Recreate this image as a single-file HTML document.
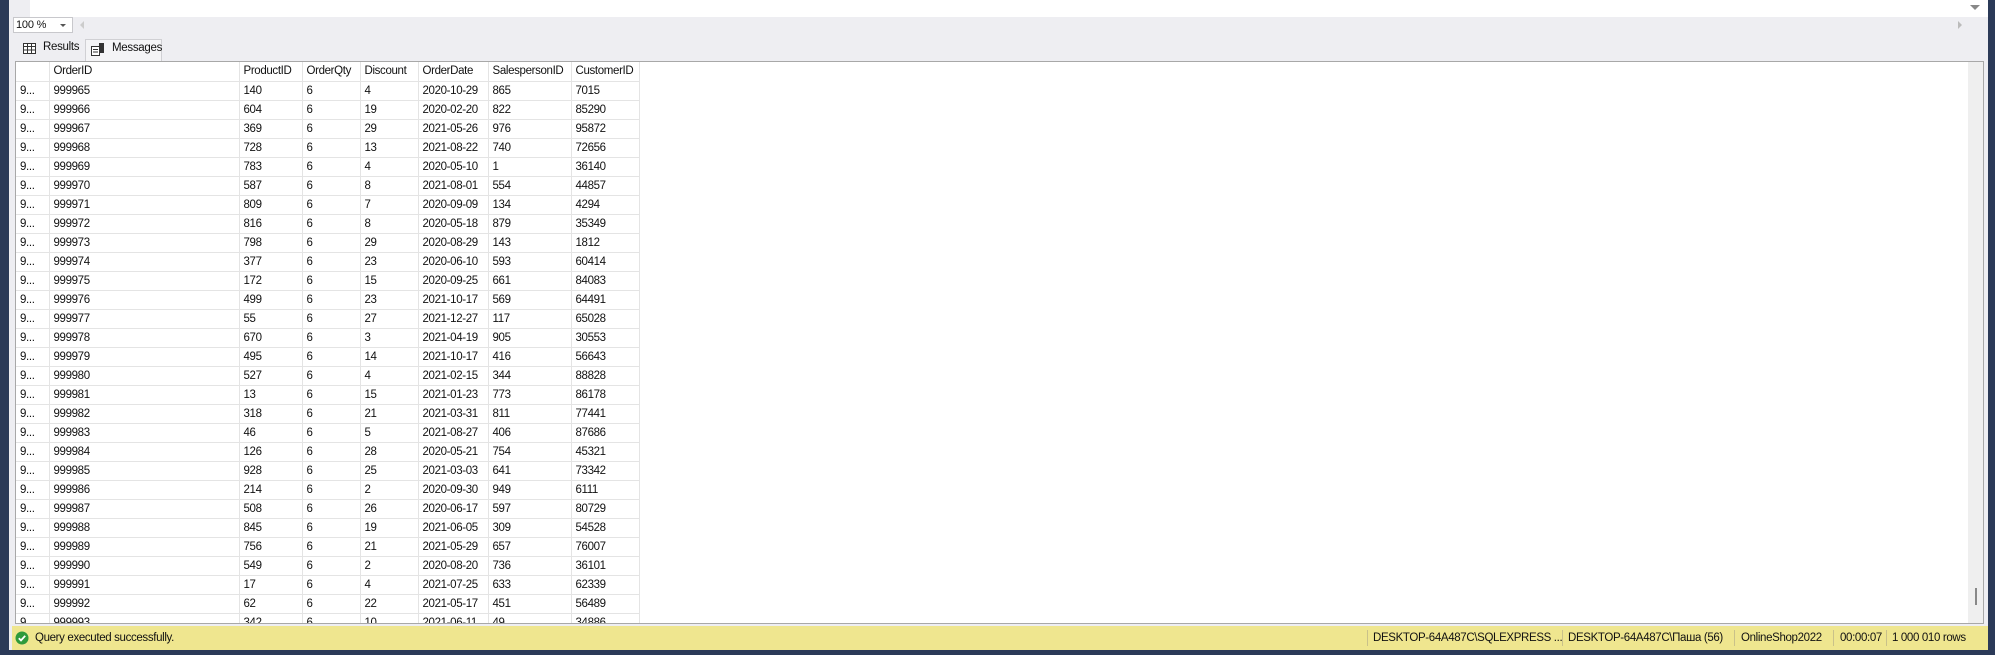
<!DOCTYPE html>
<html><head><meta charset="utf-8"><style>
*{margin:0;padding:0;box-sizing:border-box}
body{width:1995px;height:655px;background:#2b3a58;position:relative;overflow:hidden;font-family:"Liberation Sans","DejaVu Sans",sans-serif;font-size:12px;color:#111}
.abs{position:absolute}
#main{left:9px;top:0;width:1979px;height:650px;background:#eeeef2}
#topw{left:30px;top:0;width:1958px;height:17px;background:#fff}
#zoom{left:13px;top:17px;width:60px;height:16px;background:#fff;border:1px solid #c8c8cc;font-size:11px;line-height:14px;padding-left:2px;letter-spacing:-0.2px}
#grid{left:15px;top:61px;width:1969px;height:563px;background:#fff;border:1px solid #a8a8a8;overflow:hidden}
table{border-collapse:collapse;table-layout:fixed;position:absolute;left:0;top:0}
td{height:19px;border-right:1px solid #e4e4e4;border-bottom:1px solid #e4e4e4;padding-left:4px;white-space:nowrap;overflow:hidden;line-height:18px;font-size:11.5px;letter-spacing:-0.35px}
#vs{right:0;top:0;width:15px;height:563px;background:#efefef}
#status{left:12px;top:626px;width:1976px;height:24px;background:#efe68f;font-size:11.5px;line-height:24px;letter-spacing:-0.35px}
.sep{position:absolute;top:4px;width:1px;height:16px;background:#c9c18a}
</style></head><body>
<div class="abs" id="main"></div>
<div class="abs" id="topw"></div>
<div class="abs" style="left:1970px;top:5px;width:0;height:0;border-left:5px solid transparent;border-right:5px solid transparent;border-top:5px solid #888"></div>
<div class="abs" id="zoom">100 %<span style="position:absolute;left:46px;top:6px;border-left:3px solid transparent;border-right:3px solid transparent;border-top:3px solid #555"></span></div>
<div class="abs" style="left:80px;top:21px;border-top:4px solid transparent;border-bottom:4px solid transparent;border-right:4px solid #ccc"></div>
<div class="abs" style="left:1958px;top:21px;border-top:4px solid transparent;border-bottom:4px solid transparent;border-left:4px solid #bbb"></div>
<div class="abs" style="left:10px;top:38px;width:75px;height:23px;background:#eeeef2"></div>
<svg class="abs" style="left:23px;top:43px" width="13" height="11"><rect x="0.5" y="0.5" width="12" height="10" fill="#fff" stroke="#333"/><path d="M0 3.5H13M0 7H13M4.5 0V11M8.5 0V11" stroke="#333"/></svg>
<div class="abs" style="left:43px;top:41px;font-size:11.5px;letter-spacing:-0.3px">Results</div>
<div class="abs" style="left:85px;top:39px;width:77px;height:22px;border:1px solid #d0d0d4;border-bottom:none;background:#f4f4f6"></div>
<svg class="abs" style="left:91px;top:43px" width="14" height="13"><rect x="0.5" y="3.5" width="8" height="9" fill="#fff" stroke="#333"/><path d="M2 6.5H7M2 9H7" stroke="#333"/><rect x="8" y="0" width="5" height="10" fill="#333"/></svg>
<div class="abs" style="left:112px;top:42px;font-size:11.5px;letter-spacing:-0.3px">Messages</div>
<div class="abs" id="grid">
<table>
<colgroup><col style="width:33px"><col style="width:190px"><col style="width:63px"><col style="width:58px"><col style="width:58px"><col style="width:70px"><col style="width:83px"><col style="width:68px"></colgroup>
<tr><td></td><td>OrderID</td><td>ProductID</td><td>OrderQty</td><td>Discount</td><td>OrderDate</td><td>SalespersonID</td><td>CustomerID</td></tr>
<tr><td>9...</td><td>999965</td><td>140</td><td>6</td><td>4</td><td>2020-10-29</td><td>865</td><td>7015</td></tr>
<tr><td>9...</td><td>999966</td><td>604</td><td>6</td><td>19</td><td>2020-02-20</td><td>822</td><td>85290</td></tr>
<tr><td>9...</td><td>999967</td><td>369</td><td>6</td><td>29</td><td>2021-05-26</td><td>976</td><td>95872</td></tr>
<tr><td>9...</td><td>999968</td><td>728</td><td>6</td><td>13</td><td>2021-08-22</td><td>740</td><td>72656</td></tr>
<tr><td>9...</td><td>999969</td><td>783</td><td>6</td><td>4</td><td>2020-05-10</td><td>1</td><td>36140</td></tr>
<tr><td>9...</td><td>999970</td><td>587</td><td>6</td><td>8</td><td>2021-08-01</td><td>554</td><td>44857</td></tr>
<tr><td>9...</td><td>999971</td><td>809</td><td>6</td><td>7</td><td>2020-09-09</td><td>134</td><td>4294</td></tr>
<tr><td>9...</td><td>999972</td><td>816</td><td>6</td><td>8</td><td>2020-05-18</td><td>879</td><td>35349</td></tr>
<tr><td>9...</td><td>999973</td><td>798</td><td>6</td><td>29</td><td>2020-08-29</td><td>143</td><td>1812</td></tr>
<tr><td>9...</td><td>999974</td><td>377</td><td>6</td><td>23</td><td>2020-06-10</td><td>593</td><td>60414</td></tr>
<tr><td>9...</td><td>999975</td><td>172</td><td>6</td><td>15</td><td>2020-09-25</td><td>661</td><td>84083</td></tr>
<tr><td>9...</td><td>999976</td><td>499</td><td>6</td><td>23</td><td>2021-10-17</td><td>569</td><td>64491</td></tr>
<tr><td>9...</td><td>999977</td><td>55</td><td>6</td><td>27</td><td>2021-12-27</td><td>117</td><td>65028</td></tr>
<tr><td>9...</td><td>999978</td><td>670</td><td>6</td><td>3</td><td>2021-04-19</td><td>905</td><td>30553</td></tr>
<tr><td>9...</td><td>999979</td><td>495</td><td>6</td><td>14</td><td>2021-10-17</td><td>416</td><td>56643</td></tr>
<tr><td>9...</td><td>999980</td><td>527</td><td>6</td><td>4</td><td>2021-02-15</td><td>344</td><td>88828</td></tr>
<tr><td>9...</td><td>999981</td><td>13</td><td>6</td><td>15</td><td>2021-01-23</td><td>773</td><td>86178</td></tr>
<tr><td>9...</td><td>999982</td><td>318</td><td>6</td><td>21</td><td>2021-03-31</td><td>811</td><td>77441</td></tr>
<tr><td>9...</td><td>999983</td><td>46</td><td>6</td><td>5</td><td>2021-08-27</td><td>406</td><td>87686</td></tr>
<tr><td>9...</td><td>999984</td><td>126</td><td>6</td><td>28</td><td>2020-05-21</td><td>754</td><td>45321</td></tr>
<tr><td>9...</td><td>999985</td><td>928</td><td>6</td><td>25</td><td>2021-03-03</td><td>641</td><td>73342</td></tr>
<tr><td>9...</td><td>999986</td><td>214</td><td>6</td><td>2</td><td>2020-09-30</td><td>949</td><td>6111</td></tr>
<tr><td>9...</td><td>999987</td><td>508</td><td>6</td><td>26</td><td>2020-06-17</td><td>597</td><td>80729</td></tr>
<tr><td>9...</td><td>999988</td><td>845</td><td>6</td><td>19</td><td>2021-06-05</td><td>309</td><td>54528</td></tr>
<tr><td>9...</td><td>999989</td><td>756</td><td>6</td><td>21</td><td>2021-05-29</td><td>657</td><td>76007</td></tr>
<tr><td>9...</td><td>999990</td><td>549</td><td>6</td><td>2</td><td>2020-08-20</td><td>736</td><td>36101</td></tr>
<tr><td>9...</td><td>999991</td><td>17</td><td>6</td><td>4</td><td>2021-07-25</td><td>633</td><td>62339</td></tr>
<tr><td>9...</td><td>999992</td><td>62</td><td>6</td><td>22</td><td>2021-05-17</td><td>451</td><td>56489</td></tr>
<tr><td>9...</td><td>999993</td><td>342</td><td>6</td><td>10</td><td>2021-06-11</td><td>49</td><td>34886</td></tr>
</table>
<div class="abs" id="vs"><div class="abs" style="left:7px;top:526px;width:2px;height:17px;background:#888"></div></div>
</div>
<div class="abs" id="status">
<svg class="abs" style="left:3px;top:5px" width="14" height="14"><circle cx="7" cy="7" r="6.5" fill="#2f9a3b"/><path d="M3.8 7.2L6 9.4L10.2 4.8" stroke="#fff" stroke-width="1.8" fill="none"/></svg>
<span class="abs" style="left:23px">Query executed successfully.</span>
<div class="sep" style="left:1355px"></div><span class="abs" style="left:1361px">DESKTOP-64A487C\SQLEXPRESS ...</span>
<div class="sep" style="left:1550px"></div><span class="abs" style="left:1556px">DESKTOP-64A487C\Паша (56)</span>
<div class="sep" style="left:1722px"></div><span class="abs" style="left:1729px">OnlineShop2022</span>
<div class="sep" style="left:1821px"></div><span class="abs" style="left:1828px">00:00:07</span>
<div class="sep" style="left:1874px"></div><span class="abs" style="left:1880px">1 000 010 rows</span>
</div>
</body></html>
